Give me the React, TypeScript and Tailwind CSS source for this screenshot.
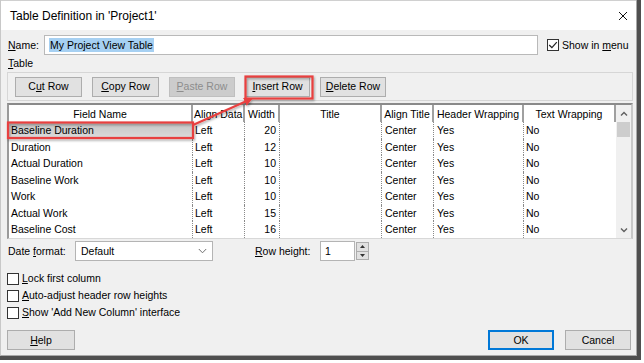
import React from "react";

const ROWS = [
  ["Baseline Duration", "Left", "20"],
  ["Duration", "Left", "12"],
  ["Actual Duration", "Left", "10"],
  ["Baseline Work", "Left", "10"],
  ["Work", "Left", "10"],
  ["Actual Work", "Left", "15"],
  ["Baseline Cost", "Left", "16"],
];

const GRID = "grid grid-cols-[184px_52px_35px_102px_52px_90px_92px]";

function U({ children }: { children: React.ReactNode }) {
  return <span className="underline underline-offset-[1px]">{children}</span>;
}

interface BtnProps {
  children: React.ReactNode;
  w?: string;
  disabled?: boolean;
  primary?: boolean;
}

function Btn({ children, w = "w-[67px]", disabled, primary }: BtnProps) {
  return (
    <button
      type="button"
      className={[
        w,
        "h-[20px] flex items-center justify-center shrink-0",
        disabled
          ? "bg-[#cccccc] border border-[#bfbfbf] text-[#8d8d8d]"
          : "bg-[#e1e1e1] text-black",
        !disabled && primary ? "border-2 border-[#0078d7]" : "",
        !disabled && !primary ? "border border-[#adadad]" : "",
      ].join(" ")}
    >
      <span>{children}</span>
    </button>
  );
}

function Check({ checked }: { checked?: boolean }) {
  return (
    <span className="w-[12px] h-[12px] border border-[#333333] bg-white flex items-center justify-center shrink-0">
      {checked && (
        <svg width="10" height="10" viewBox="0 0 10 10">
          <path d="M1.2 5 L3.9 7.7 L8.8 2.2" fill="none" stroke="#222" strokeWidth="1.2" />
        </svg>
      )}
    </span>
  );
}

export default function App() {
  return (
    <div className="w-[644px] h-[363px] bg-white relative font-['Liberation_Sans',Arial,sans-serif] text-[10.5px] text-black leading-none">
      {/* dialog frame */}
      <div className="w-[641px] h-[360px] border-r-[4px] border-b-[4px] border-[#4f4f4f]">
        <div className="w-full h-full flex flex-col bg-[#f0f0f0] border-l border-l-[#c8c8c8] border-r border-r-[#a8a8a8] border-b border-b-[#a8a8a8]">
          {/* title bar */}
          <div className="h-[30px] bg-white flex items-center justify-between pl-[9px] pr-[8px] border-t border-t-[#d0d0d0] shrink-0">
            <span className="text-[12px]">Table Definition in 'Project1'</span>
            <svg width="10" height="10" viewBox="0 0 10 10">
              <path d="M1 1 L9 9 M9 1 L1 9" stroke="#111" strokeWidth="1" />
            </svg>
          </div>

          <div className="flex flex-col pl-[6px] pr-[4px]">
            {/* name row */}
            <div className="mt-[5px] h-[20px] flex items-center">
              <span className="w-[37px] pl-[1px]">
                <U>N</U>ame:
              </span>
              <div className="w-[494px] h-[20px] bg-white border border-[#b9b9b9] flex items-center pl-[4px]">
                <span className="bg-[#a6d0f2] px-[1px] py-[2px]">My Project View Table</span>
              </div>
              <span className="ml-[9px] flex items-center gap-[3px]">
                <Check checked />
                <span>
                  Show in <U>m</U>enu
                </span>
              </span>
            </div>

            {/* table label */}
            <div className="h-[16px] flex items-center pl-[1px]">
              <span>
                <U>T</U>able
              </span>
            </div>

            {/* button group */}
            <div className="mt-[1px] w-[626px] h-[29px] border border-[#d6d6d6] flex items-center gap-[10px] pl-[7px]">
              <Btn>
                C<U>u</U>t Row
              </Btn>
              <Btn>
                <U>C</U>opy Row
              </Btn>
              <Btn disabled w="w-[66px]">
                <U>P</U>aste Row
              </Btn>
              <Btn w="w-[65px]">
                <U>I</U>nsert Row
              </Btn>
              <Btn w="w-[66px]">
                <U>D</U>elete Row
              </Btn>
            </div>

            {/* table */}
            <div className="mt-[2px] w-[626px] h-[136px] bg-white border-l-2 border-r-2 border-t-2 border-b border-l-[#9a9a9a] border-r-[#c8c8c8] border-t-[#8a8a8a] border-b-[#d8d8d8] flex overflow-hidden">
              <div className="w-[607px] flex flex-col">
                <div className={GRID + " h-[17px] bg-white"}>
                  {["Field Name", "Align Data", "Width", "Title", "Align Title", "Header Wrapping", "Text Wrapping"].map((h, i) => (
                    <div
                      key={h}
                      className={[
                        "flex items-center whitespace-nowrap overflow-hidden border-r-2 border-[#a0a0a0] pt-[2px]",
                        i === 1 ? "justify-start pl-[1px]" : "justify-center",
                        i === 6 ? "border-r-0" : "",
                      ].join(" ")}
                    >
                      {h}
                    </div>
                  ))}
                </div>
                {ROWS.map((r, idx) => (
                  <div key={r[0]} className={GRID + " h-[16.6px]"}>
                    <div
                      className={[
                        "flex items-center pl-[2px] border-r border-dotted border-[#8a8a8a]",
                        idx === 0 ? "bg-gradient-to-b from-[#c4c4c4] to-[#dcdcdc]" : "",
                      ].join(" ")}
                    >
                      {r[0]}
                    </div>
                    <div className="flex items-center pl-[2px] border-r border-dotted border-[#8a8a8a]">{r[1]}</div>
                    <div className="flex items-center justify-end pr-[3px] border-r border-dotted border-[#8a8a8a]">{r[2]}</div>
                    <div className="border-r border-dotted border-[#8a8a8a]" />
                    <div className="flex items-center pl-[3px] border-r border-dotted border-[#8a8a8a]">Center</div>
                    <div className="flex items-center pl-[3px] border-r border-dotted border-[#8a8a8a]">Yes</div>
                    <div className="flex items-center pl-[2px]">No</div>
                  </div>
                ))}
              </div>
              {/* scrollbar */}
              <div className="w-[15px] bg-[#f0f0f0] flex flex-col items-center">
                <div className="h-[17px] flex items-center justify-center">
                  <svg width="8" height="6" viewBox="0 0 8 6">
                    <path d="M1 4.5 L4 1.5 L7 4.5" fill="none" stroke="#606060" strokeWidth="1.4" />
                  </svg>
                </div>
                <div className="w-[13px] h-[15px] bg-[#cdcdcd]" />
                <div className="flex-1" />
                <div className="h-[16px] flex items-center justify-center">
                  <svg width="8" height="6" viewBox="0 0 8 6">
                    <path d="M1 1.5 L4 4.5 L7 1.5" fill="none" stroke="#606060" strokeWidth="1.4" />
                  </svg>
                </div>
              </div>
            </div>

            {/* date format / row height */}
            <div className="mt-[2px] h-[20px] flex items-center">
              <span className="w-[68px] pl-[1px]">
                Date <U>f</U>ormat:
              </span>
              <div className="w-[138px] h-[20px] bg-white border border-[#b4b4b4] flex items-center justify-between pl-[5px] pr-[5px]">
                <span>Default</span>
                <svg width="9" height="6" viewBox="0 0 9 6">
                  <path d="M0.8 1 L4.5 4.8 L8.2 1" fill="none" stroke="#707070" strokeWidth="1" />
                </svg>
              </div>
              <span className="ml-[42px] w-[65px]">
                <U>R</U>ow height:
              </span>
              <div className="w-[35px] h-[20px] bg-white border border-[#b4b4b4] flex items-center pl-[4px]">1</div>
              <div className="ml-[1px] w-[13px] h-[18px] flex flex-col border border-[#adadad] bg-[#e1e1e1]">
                <div className="flex-1 flex items-center justify-center border-b border-[#adadad]">
                  <svg width="5" height="3" viewBox="0 0 5 3">
                    <path d="M0 3 L2.5 0 L5 3 Z" fill="#333" />
                  </svg>
                </div>
                <div className="flex-1 flex items-center justify-center">
                  <svg width="5" height="3" viewBox="0 0 5 3">
                    <path d="M0 0 L2.5 3 L5 0 Z" fill="#333" />
                  </svg>
                </div>
              </div>
            </div>

            {/* checkboxes */}
            <div className="mt-[9px] flex flex-col">
              <div className="h-[17px] flex items-center gap-[3px]">
                <Check />
                <span>
                  <U>L</U>ock first column
                </span>
              </div>
              <div className="h-[17px] flex items-center gap-[3px]">
                <Check />
                <span>
                  <U>A</U>uto-adjust header row heights
                </span>
              </div>
              <div className="h-[17px] flex items-center gap-[3px]">
                <Check />
                <span>
                  <U>S</U>how 'Add New Column' interface
                </span>
              </div>
            </div>

            {/* bottom buttons */}
            <div className="mt-[9px] flex items-center pr-[1px]">
              <Btn w="w-[68px]">
                <U>H</U>elp
              </Btn>
              <div className="flex-1" />
              <Btn w="w-[66px]" primary>
                OK
              </Btn>
              <div className="w-[11px]" />
              <Btn w="w-[66px]">Cancel</Btn>
            </div>
          </div>
        </div>
      </div>

      {/* red annotation overlay */}
      <svg className="absolute left-0 top-0 pointer-events-none" width="644" height="363" viewBox="0 0 644 363">
        <defs>
          <marker id="ah" markerWidth="4" markerHeight="4" refX="2.6" refY="2" orient="auto" markerUnits="strokeWidth">
            <path d="M0 0 L4 2 L0 4 Z" fill="#e8403f" />
          </marker>
          <filter id="sh" x="-10%" y="-10%" width="130%" height="140%">
            <feDropShadow dx="1" dy="1.5" stdDeviation="1" floodColor="#000" floodOpacity="0.35" />
          </filter>
        </defs>
        <g filter="url(#sh)">
          <rect x="245.5" y="76.5" width="67" height="22" fill="none" stroke="#e8403f" strokeWidth="2.2" />
          <rect x="8" y="122.5" width="185" height="15.5" fill="none" stroke="#e8403f" strokeWidth="2.2" />
          <line x1="193" y1="125" x2="250" y2="99.5" stroke="#e8403f" strokeWidth="2.2" markerEnd="url(#ah)" />
        </g>
      </svg>
    </div>
  );
}
